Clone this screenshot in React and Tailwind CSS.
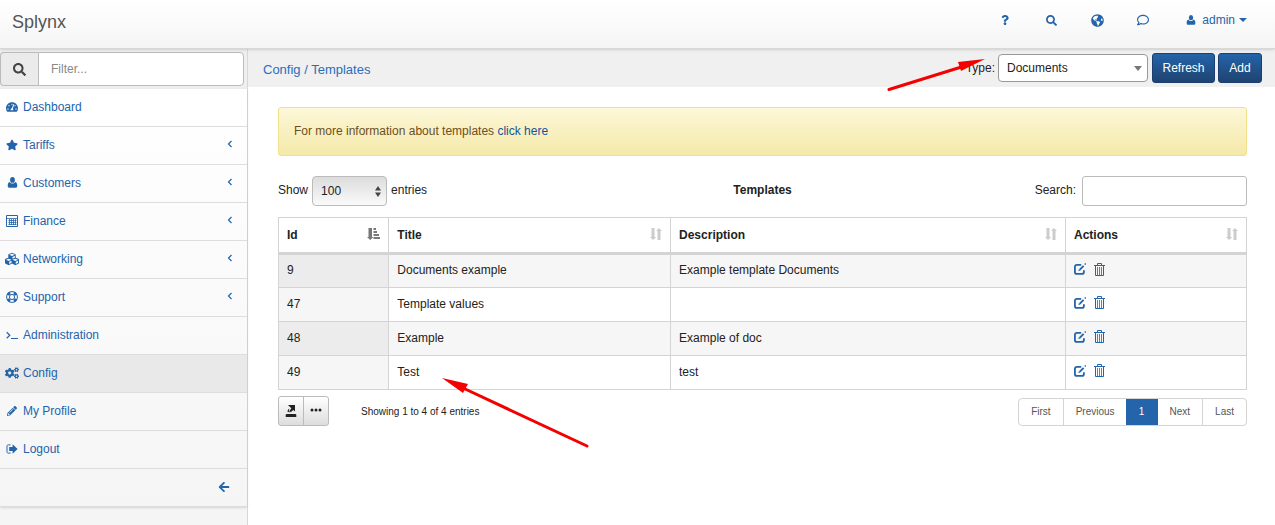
import {
  FaSearch, FaStar, FaCubes, FaCogs, FaPencilAlt, FaArrowLeft, FaTachometerAlt,
  FaGlobeAmericas, FaRegComment, FaQuestion,
} from "react-icons/fa";

const UserIcon = ({ className }) => (
  <svg viewBox="0 0 12 12" className={className} fill="currentColor" aria-hidden="true">
    <ellipse cx="6" cy="3.2" rx="2.6" ry="3.100" />
    <path d="M3 5.400C3.800 6.900 5 7.200 6 7.200S8.200 6.900 9 5.400C10.600 5.900 11.200 7.400 11.200 9.600c0 1.400-.5 2.100-1.600 2.100H2.400c-1.100 0-1.600-.7-1.600-2.100 0-2.200.6-3.700 2.200-4.200z" />
  </svg>
);

const CalcIcon = ({ className }) => (
  <svg viewBox="0 0 12 12" className={className} fill="none" stroke="currentColor" aria-hidden="true">
    <path d="M.5.5h11v11H.5z" />
    <path d="M1 3.500h10M2.500 5.500h8M2.500 7.500h8M2.500 9.500h8M3.500 4v6M5.500 4v6M7.500 4v6M9.500 4v6" strokeWidth=".8" />
  </svg>
);

const RingIcon = ({ className }) => (
  <svg viewBox="0 0 12 12" className={className} fill="none" stroke="currentColor" aria-hidden="true">
    <circle cx="6" cy="6" r="5.4" />
    <circle cx="6" cy="6" r="2.6" />
    <path strokeWidth="2.8" d="M7.900 1.900A4.400 4.400 0 0 1 10.100 4.100M10.100 7.900A4.400 4.400 0 0 1 7.900 10.100M4.100 10.100A4.400 4.400 0 0 1 1.900 7.900M1.900 4.100A4.400 4.400 0 0 1 4.100 1.900" />
  </svg>
);

const TerminalIcon = ({ className }) => (
  <svg viewBox="0 0 12 12" className={className} fill="none" stroke="currentColor" aria-hidden="true">
    <path strokeWidth="1.200" d="M.7 3.200 3.800 6.200.7 9.200" />
    <path d="M5 9.500h7" />
  </svg>
);

const LogoutIcon = ({ className }) => (
  <svg viewBox="0 0 12 12" className={className} fill="none" stroke="currentColor" aria-hidden="true">
    <path d="M4.500 1.900H2.400C1.400 1.900 1 2.400 1 3.200v5.600c0 .8.4 1.300 1.400 1.300h2.100" />
    <path fill="currentColor" stroke="none" d="M3.200 4h3.400V1.200L11.600 6 6.600 10.800V8H3.200z" />
  </svg>
);

const EditIcon = ({ className }) => (
  <svg viewBox="0 0 12 12" className={className} fill="none" stroke="currentColor" aria-hidden="true">
    <path strokeWidth="1.800" d="M7.200 1.900H2.900c-1.200 0-2 .8-2 2v5c0 1.200.8 2 2 2h5c1.200 0 2-.8 2-2V7.200" />
    <path strokeWidth="1.900" d="M5.600 6.900 9.600 2.900" />
    <path fill="currentColor" stroke="none" d="m10.200.9 1.100-.9.9.9-.9 1.100zM4.400 8.100l.4-1.800 1.400 1.400z" />
  </svg>
);

const TrashIcon = ({ className }) => (
  <svg viewBox="0 0 11 13" className={className} fill="none" stroke="currentColor" aria-hidden="true">
    <path d="M0 2.500h11M3.500 2V.5h4V2M1.500 3v9.500h8V3" />
    <path strokeWidth=".8" d="M3.500 4v8M5.500 4v8M7.500 4v8" />
  </svg>
);

const SortIcon = ({ className }) => (
  <svg viewBox="0 0 12 12" className={className} fill="currentColor" aria-hidden="true">
    <path d="M1.500 0h3v9h1.700L3 12 0 9h1.500zM7.500 12h3V3H12L9 0 6 3h1.500z" />
  </svg>
);

const SortAscIcon = ({ className }) => (
  <svg viewBox="0 0 13 12" className={className} fill="currentColor" aria-hidden="true">
    <path d="M1.500 0h3.500v9h1.500L3.200 12 0 9h1.500zM6.500 0H9v2H6.500zM6.500 3H10v2H6.500zM6.500 6h5.500v2H6.500zM6.500 9H13v2H6.500z" />
  </svg>
);

const ExportIcon = ({ className }) => (
  <svg viewBox="0 0 12 12" className={className} fill="currentColor" aria-hidden="true">
    <path d="M3 0h7v6.500L8.200 4.900 5.800 7.200 4.500 6 6.300 3.200 5 2zM3.300 4.200 4.600 3.400 3.800 5.200 5 7.600 2.300 6.500zM1.500 9h9l.8.8V12H.7V9.800z" />
  </svg>
);

const nav = [
  { label: "Dashboard", Icon: FaTachometerAlt },
  { label: "Tariffs", Icon: FaStar, more: true },
  { label: "Customers", Icon: UserIcon, more: true },
  { label: "Finance", Icon: CalcIcon, more: true },
  { label: "Networking", Icon: FaCubes, more: true },
  { label: "Support", Icon: RingIcon, more: true },
  { label: "Administration", Icon: TerminalIcon },
  { label: "Config", Icon: FaCogs, active: true },
  { label: "My Profile", Icon: FaPencilAlt },
  { label: "Logout", Icon: LogoutIcon },
];

const iconSizes = { Networking: "size-3.5", Config: "size-3.5", "My Profile": "size-2.5", Customers: "size-[11px]" };

const rows = [
  [9, "Documents example", "Example template Documents"],
  [47, "Template values", ""],
  [48, "Example", "Example of doc"],
  [49, "Test", "test"],
];

const columns = ["Id", "Title", "Description", "Actions"];

function Header() {
  return (
    <header className="relative z-10 flex h-[49px] items-center justify-between border-b border-[#d8d8d8] bg-linear-to-b from-white to-[#f5f5f5] pr-3 pb-1 pl-3 shadow-sm">
      <a href="#" className="text-lg leading-5 text-[#555]">Splynx</a>
      <div className="flex items-center pb-1 text-[#2364aa]">
        <nav className="mr-9 flex items-center gap-8">
          <button aria-label="Help" className="flex w-3.5 justify-center"><FaQuestion className="size-2.5" /></button>
          <button aria-label="Search" className="flex w-3.5 justify-center"><FaSearch className="size-[11px]" /></button>
          <button aria-label="Language" className="flex w-3.5 justify-center"><FaGlobeAmericas className="size-[13px]" /></button>
          <button aria-label="Messages" className="flex w-3.5 justify-center"><FaRegComment className="size-3" /></button>
        </nav>
        <button className="mr-4 flex items-center gap-1">
          <UserIcon className="size-2.5" />
          <span className="ml-0.5">admin</span>
          <svg viewBox="0 0 8 4" className="h-1 w-2" fill="currentColor" aria-hidden="true"><path d="M0 0h8L4 4z" /></svg>
        </button>
      </div>
    </header>
  );
}

function Sidebar() {
  return (
    <aside className="w-62 shrink-0 border-r border-[#d8d8d8] bg-[#f5f5f5]">
      <div className="flex h-10 items-center bg-[#efefef] pr-[3px]">
        <label htmlFor="filter" className="flex h-[34px] w-[38px] items-center justify-center rounded-l border border-r-0 border-[#bbb] bg-[#ebebeb]">
          <FaSearch className="size-[13px] text-[#444]" />
        </label>
        <input id="filter" placeholder="Filter..." className="h-[34px] min-w-0 flex-1 rounded-r border border-[#bbb] bg-white px-3 placeholder:text-[#888]" />
      </div>
      <ul className="bg-linear-to-b from-white to-[#f5f5f5] shadow-sm">
        {nav.map(({ label, Icon, more, active }) => (
          <li key={label} className={active ? "border-b border-[#ddd] bg-[#e9e9e9]" : "border-b border-[#ddd]"}>
            <a href="#" className="flex h-[37px] items-center pr-3.5 pb-0.5 pl-[5px] text-[#2364aa]">
              <span className="mr-1 flex w-3.5 shrink-0 justify-center">
                <Icon className={iconSizes[label] ?? "size-3"} />
              </span>
              <span className="flex-1">{label}</span>
              {more && (
                <svg viewBox="0 0 6 8" className="mb-0.5 h-2 w-1.5" fill="none" stroke="currentColor" aria-hidden="true"><path strokeWidth="1.200" d="M4.500 1 1.500 4l3 3" /></svg>
              )}
            </a>
          </li>
        ))}
        <li className="flex h-[38px] items-center justify-end border-b border-[#ddd] pr-[17px] pb-0.5">
          <button aria-label="Collapse menu" className="text-[#2364aa]"><FaArrowLeft className="size-3" /></button>
        </li>
      </ul>
    </aside>
  );
}

function Toolbar() {
  const button = "h-[30px] rounded-[3px] border border-[#1a3f70] bg-linear-to-b from-[#2364aa] to-[#1f4371] text-white";
  return (
    <div className="flex h-[38px] items-center justify-between bg-[#f0f0f0] pl-[15px] pr-[13px]">
      <div className="pt-1 text-[13px] text-[#2a6ebb]">
        <a href="#">Config</a> / <a href="#">Templates</a>
      </div>
      <div className="flex items-center gap-[3px]">
        <label htmlFor="type">Type:</label>
        <span className="relative mr-px flex items-center">
          <select id="type" className="h-7 w-[150px] appearance-none rounded border border-[#999] bg-white px-2">
            <option>Documents</option>
          </select>
          <svg viewBox="0 0 8 5" className="pointer-events-none absolute right-1.5 h-[5px] w-2" fill="#777" aria-hidden="true"><path d="M0 0h8L4 5z" /></svg>
        </span>
        <button className={`${button} w-[63px]`}>Refresh</button>
        <button className={`${button} w-[44px]`}>Add</button>
      </div>
    </div>
  );
}

function TemplatesTable() {
  return (
    <table className="w-full table-fixed border-collapse text-left">
      <colgroup>
        <col className="w-[11.4%]" />
        <col className="w-[29.1%]" />
        <col className="w-[40.8%]" />
        <col className="w-[18.7%]" />
      </colgroup>
      <thead>
        <tr className="h-9">
          {columns.map((name, i) => (
            <th key={name} className="border border-b-3 border-[#d4d4d4] px-2 font-bold">
              <span className="flex items-center justify-between">
                {name}
                {i === 0 ? <SortAscIcon className="mb-0.5 h-3 w-[13px] text-[#777]" /> : <SortIcon className="mb-0.5 size-3 text-[#ccc]" />}
              </span>
            </th>
          ))}
        </tr>
      </thead>
      <tbody>
        {rows.map(([id, title, description], i) => (
          <tr key={id} className={i % 2 === 0 ? "h-[34px] bg-[#f6f6f6]" : "h-[34px] bg-white"}>
            <td className={i % 2 === 0 ? "border border-[#d4d4d4] bg-[#ececec] px-2 pb-0.5" : "border border-[#d4d4d4] bg-[#f6f6f6] px-2 pb-0.5"}>{id}</td>
            <td className="border border-[#d4d4d4] px-2 pb-0.5">{title}</td>
            <td className="border border-[#d4d4d4] px-2 pb-0.5">{description}</td>
            <td className="border border-[#d4d4d4] px-2 pb-1 text-[#2364aa]">
              <span className="flex items-center gap-2">
                <button aria-label={`Edit ${title}`}><EditIcon className="block size-3" /></button>
                <button aria-label={`Delete ${title}`}><TrashIcon className="block h-[13px] w-[11px]" /></button>
              </span>
            </td>
          </tr>
        ))}
      </tbody>
    </table>
  );
}

function Pagination() {
  return (
    <nav aria-label="Pages" className="flex h-7 overflow-hidden rounded border border-[#d4d4d4] text-[10px] text-[#555]">
      <button className="border-r border-[#d4d4d4] px-3">First</button>
      <button className="pr-[11px] pl-3">Previous</button>
      <button aria-current="page" className="-my-px w-8 bg-[#2364aa] text-white">1</button>
      <button className="border-r border-[#d4d4d4] px-3">Next</button>
      <button className="px-3">Last</button>
    </nav>
  );
}

export default function App() {
  const tool = "flex h-[30px] w-[26px] items-center justify-center border border-[#bbb] bg-linear-to-b from-white to-[#ddd]";
  return (
    <div className="relative flex min-h-screen flex-col bg-white font-['Liberation_Sans',Arial,sans-serif] text-xs text-[#222]">
      <Header />
      <div className="flex flex-1">
        <Sidebar />
        <div className="min-w-0 flex-1">
          <Toolbar />
          <main className="pt-5 pr-7 pl-[30px]">
            <div className="flex h-[49px] items-center rounded-[3px] border border-[#f3e08c] bg-linear-to-b from-[#fcf7d8] to-[#f5e9a9] px-[15px] pb-0.5 text-[#6b4f20]">
              <p>For more information about templates <a href="#" className="text-[#15539a]">click here</a></p>
            </div>
            <div className="mt-5 mb-[11px] grid grid-cols-3 items-center">
              <div className="flex items-center gap-1">
                <label htmlFor="count" className="pb-0.5">Show</label>
                <span className="relative flex items-center">
                  <select id="count" className="h-[30px] w-[75px] appearance-none rounded border border-[#bbb] bg-linear-to-b from-[#dcdcdc] to-[#fafafa] px-2">
                    <option>100</option>
                  </select>
                  <svg viewBox="0 0 6 11" className="pointer-events-none absolute right-1.5 h-[11px] w-1.5" fill="#444" aria-hidden="true"><path d="M3 0 6 4.500H0zM3 11 0 6.500h6z" /></svg>
                </span>
                <span className="pb-0.5">entries</span>
              </div>
              <h1 className="pb-0.5 text-center font-bold">Templates</h1>
              <div className="flex items-center justify-end gap-1.5">
                <label htmlFor="search" className="pb-0.5">Search:</label>
                <input id="search" className="h-[30px] w-[165px] rounded-[3px] border border-[#bbb] bg-white px-2" />
              </div>
            </div>
            <TemplatesTable />
            <div className="mt-1.5 flex items-end justify-between">
              <div className="flex items-center">
                <button aria-label="Export" className={`${tool} rounded-l-[3px]`}><ExportIcon className="size-3" /></button>
                <button aria-label="More" className={`${tool} -ml-px rounded-r-[3px]`}>
                  <svg viewBox="0 0 12 4" className="mb-0.5 h-1 w-3" fill="currentColor" aria-hidden="true"><circle cx="2" cy="2" r="1.500" /><circle cx="6" cy="2" r="1.500" /><circle cx="10" cy="2" r="1.500" /></svg>
                </button>
                <p className="ml-8 pt-0.5 text-[10px]">Showing 1 to 4 of 4 entries</p>
              </div>
              <Pagination />
            </div>
          </main>
        </div>
      </div>
      <svg viewBox="0 0 100 34" className="pointer-events-none absolute top-[57px] right-[288px] z-20 h-[34px] w-[100px]" aria-hidden="true">
        <path d="M2 32.500 76 9.500" stroke="#f40000" strokeWidth="3" strokeLinecap="round" />
        <path d="m98 2-27 3 3 9z" fill="#f40000" />
      </svg>
      <svg viewBox="0 0 148 72" className="pointer-events-none absolute top-[376px] left-[441px] z-20 h-[72px] w-[148px]" aria-hidden="true">
        <path d="M22 12 146 70" stroke="#f40000" strokeWidth="3" strokeLinecap="round" />
        <path d="m1 2 26 6-5 9z" fill="#f40000" />
      </svg>
    </div>
  );
}
